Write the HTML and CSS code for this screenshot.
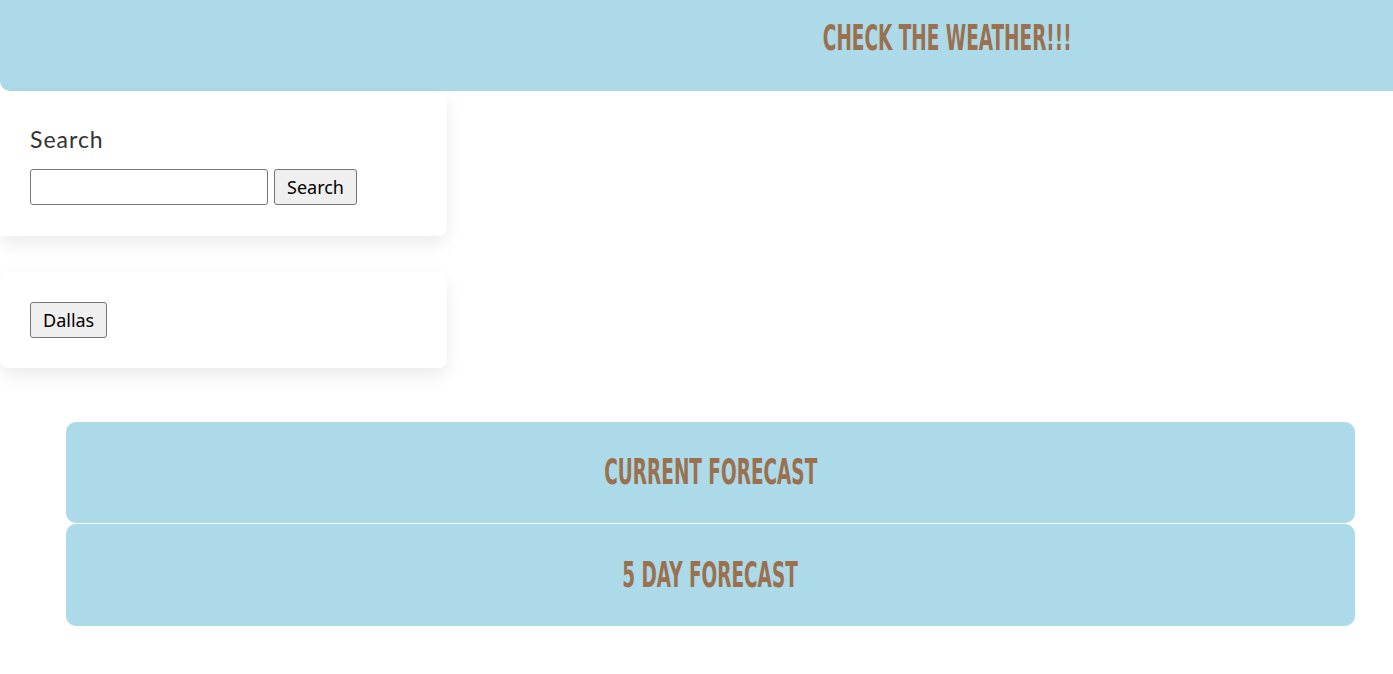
FILE: index.html
```html
<!DOCTYPE html>
<html lang="en">
<head>
<meta charset="utf-8">
<title>Weather Dashboard</title>
<link rel="stylesheet" href="styles.css">
</head>
<body>
<header class="site-header">
  <h1 class="title"><span class="bebas">Check the weather!!!</span></h1>
</header>
<main class="page">
  <aside class="sidebar">
    <section class="card search-card">
      <label class="search-label" for="city">Search</label>
      <form class="search-form">
        <input id="city" class="search-input" type="text">
        <button class="btn" type="button">Search</button>
      </form>
    </section>
    <section class="card history-card">
      <button class="btn" type="button">Dallas</button>
    </section>
  </aside>
  <section class="forecasts">
    <div class="forecast-box"><h2 class="forecast-title"><span class="bebas">Current Forecast</span></h2></div>
    <div class="forecast-box"><h2 class="forecast-title"><span class="bebas">5 Day Forecast</span></h2></div>
  </section>
</main>
</body>
</html>
```
FILE: styles.css
```css
html, body {
  margin: 0;
  padding: 0;
  background: #ffffff;
  overflow: hidden;
}

body {
  font-family: "Lato", "Open Sans", sans-serif;
  width: 1393px;
}

.bebas {
  display: inline-block;
  font-family: "DejaVu Sans Condensed", "DejaVu Sans", sans-serif;
  font-stretch: condensed;
  font-weight: 700;
  text-transform: uppercase;
  color: #9a704e;
  transform: scaleX(0.57);
  letter-spacing: 0;
}

.site-header {
  background: #acdae8;
  height: 91px;
  border-radius: 0 0 0 10px;
  display: flex;
  justify-content: center;
  padding-left: 501px;
  box-sizing: border-box;
}

.title {
  margin: 0;
  padding-top: 16px;
  font-size: 36px;
  font-weight: normal;
  line-height: 40px;
}

.page {
  display: flex;
  flex-direction: column;
}

.sidebar {
  width: 447px;
  display: flex;
  flex-direction: column;
  gap: 36px;
}

.card {
  background: #fff;
  border-radius: 0 8px 8px 0;
  box-shadow: 0 8px 18px rgba(0, 0, 0, 0.08);
  padding: 30px;
}

.search-card {
  border-radius: 0 0 8px 0;
  padding-top: 30px;
  padding-bottom: 31px;
}

.search-label {
  display: block;
  font-family: "Lato", sans-serif;
  font-size: 23px;
  color: #333;
  line-height: 36px;
  margin-bottom: 12px;
  letter-spacing: 1px;
}

.search-form {
  display: flex;
  gap: 6px;
  margin: 0;
}

.search-input {
  width: 238px;
  height: 36px;
  box-sizing: border-box;
  border: 1px solid #767676;
  border-radius: 3px;
  padding: 0 4px;
  margin: 0;
}

.btn {
  font-family: "Noto Sans", "Open Sans", sans-serif;
  font-size: 18px;
  color: #000;
  background: #efefef;
  border: 1px solid #767676;
  border-radius: 3px;
  height: 36px;
  padding: 0 12px;
  margin: 0;
  box-sizing: border-box;
}

.history-card {
  border-radius: 8px;
  padding-bottom: 30px;
  display: flex;
}

.forecasts {
  margin: 54px 0 0 66px;
  width: 1289px;
  display: flex;
  flex-direction: column;
  gap: 1px;
}

.forecast-box {
  background: #acdae8;
  border-radius: 10px;
  height: 101px;
  box-sizing: border-box;
  padding-bottom: 3px;
  display: flex;
  justify-content: center;
  align-items: center;
}

.forecast-box + .forecast-box {
  height: 102px;
}

.forecast-title {
  margin: 0;
  font-size: 36px;
  font-weight: normal;
  line-height: 40px;
}
```
